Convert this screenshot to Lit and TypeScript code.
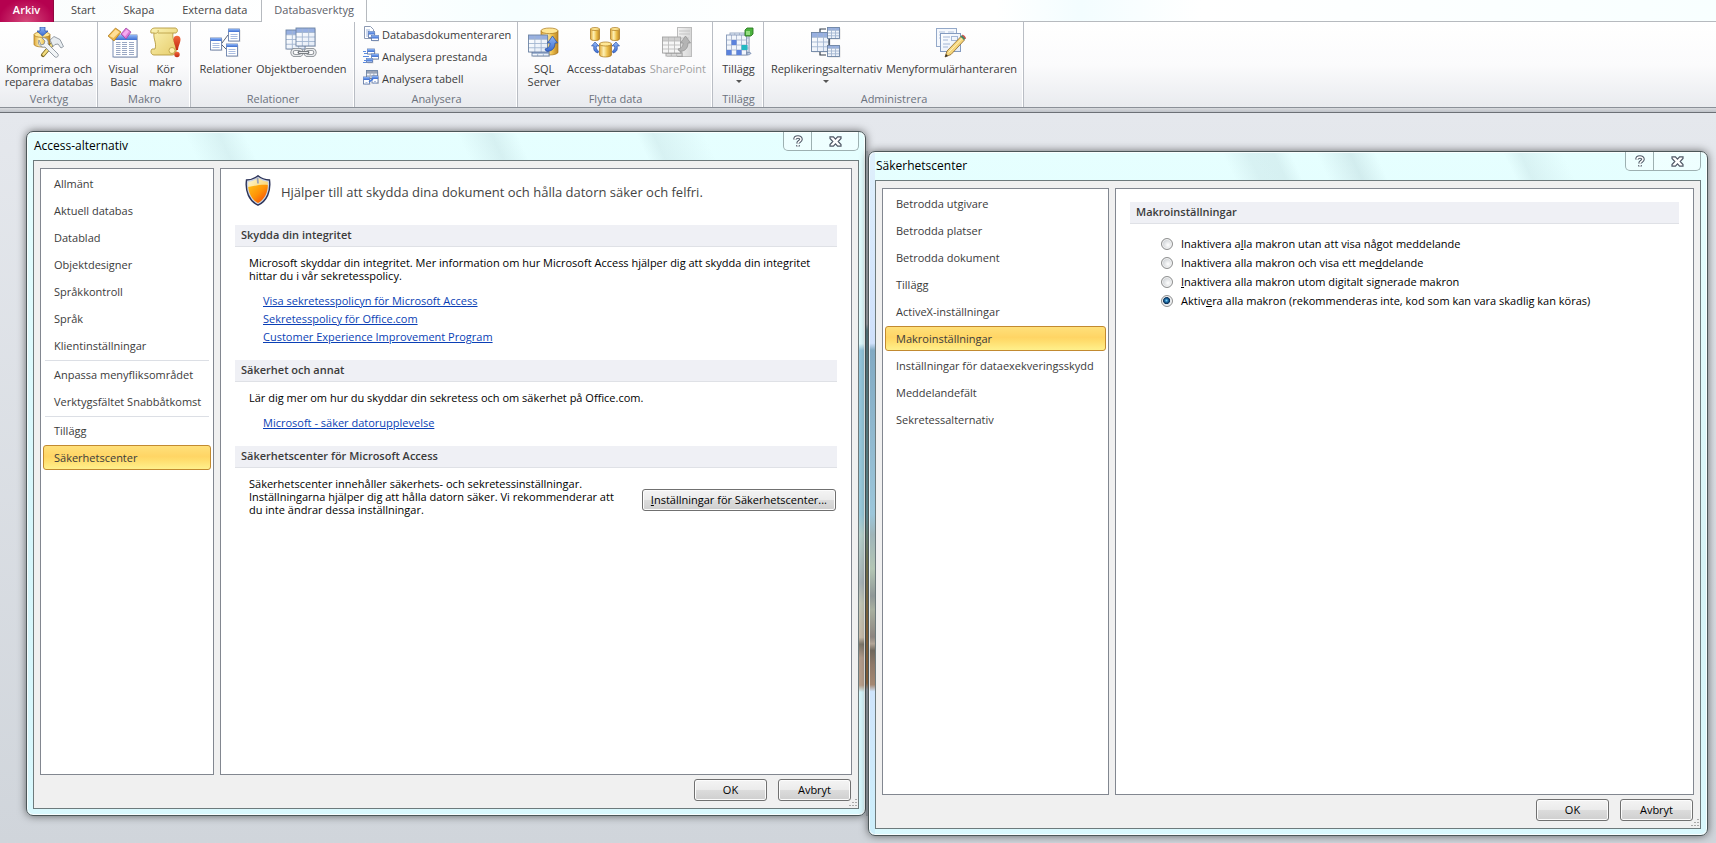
import { LitElement, html, svg, css, nothing, TemplateResult } from "lit";
import { customElement, state } from "lit/decorators.js";
import { classMap } from "lit/directives/class-map.js";

/* ---------- icon building blocks ---------- */

const defs = svg`<defs>
  <linearGradient id="gold" x1="0" x2="1"><stop offset="0" stop-color="#e0a838"/><stop offset=".35" stop-color="#fdf0b4"/><stop offset=".65" stop-color="#edc04c"/><stop offset="1" stop-color="#bd8626"/></linearGradient>
  <linearGradient id="blue" x1="0" y1="0" x2="0" y2="1"><stop offset="0" stop-color="#8fb6f5"/><stop offset="1" stop-color="#3c6dd2"/></linearGradient>
  <linearGradient id="grey" x1="0" x2="1"><stop offset="0" stop-color="#f2f2f2"/><stop offset="1" stop-color="#d6d6d6"/></linearGradient>
  <linearGradient id="paper" x1="0" y1="0" x2="1" y2="1"><stop offset="0" stop-color="#ffffff"/><stop offset="1" stop-color="#e3ebf7"/></linearGradient>
  <linearGradient id="scroll" x1="0" y1="0" x2="1" y2="1"><stop offset="0" stop-color="#fbf3b4"/><stop offset="1" stop-color="#e6cc6a"/></linearGradient>
  <linearGradient id="red" x1="0" y1="0" x2="0" y2="1"><stop offset="0" stop-color="#f4683c"/><stop offset="1" stop-color="#c02a12"/></linearGradient>
  <linearGradient id="shieldTop" x1="0" y1="0" x2="1" y2="1"><stop offset="0" stop-color="#fff6cf"/><stop offset="1" stop-color="#f6c544"/></linearGradient>
  <linearGradient id="shieldLow" x1="0" y1="0" x2="1" y2="1"><stop offset="0" stop-color="#ffc21a"/><stop offset=".5" stop-color="#ff9206"/><stop offset="1" stop-color="#f23c0c"/></linearGradient>
</defs>`;

const range = (n: number) => Array.from({ length: n }, (_, i) => i);

const grid = (x: number, y: number, w: number, h: number, cols: number, rows: number, line = "#a3b5d0", head = "#86a2dc", fill = "url(#paper)", edge = "#6d84a4") => {
  const rh = h / rows, cw = w / cols;
  return svg`<rect x=${x + 1} y=${y + 1} width=${w} height=${h} fill="#000" opacity=".12"/>
    <rect x=${x} y=${y} width=${w} height=${h} fill=${fill}/>
    <rect x=${x} y=${y} width=${w} height=${rh} fill=${head} opacity=".85"/>
    ${range(rows - 1).map(i => svg`<path d="M${x} ${y + rh * (i + 1)}h${w}" stroke=${line} stroke-width=".9"/>`)}
    ${range(cols - 1).map(i => svg`<path d="M${x + cw * (i + 1)} ${y}v${h}" stroke=${line} stroke-width=".9"/>`)}
    <rect x=${x} y=${y} width=${w} height=${h} fill="none" stroke=${edge} stroke-width=".9"/>`;
};

const drum = (x: number, y: number, w: number, h: number) => {
  const r = w / 2, e = w / 6;
  return svg`<path d="M${x} ${y + e}v${h - 2 * e}a${r} ${e} 0 0 0 ${w} 0v${-(h - 2 * e)}z" fill="url(#gold)" stroke="#a8761a" stroke-width=".7"/>
    <ellipse cx=${x + r} cy=${y + e} rx=${r} ry=${e} fill="#ffe795" stroke="#a8761a" stroke-width=".7"/>`;
};

const pane = (x: number, y: number, w: number, h: number, lines: number) => svg`
  <rect x=${x + 1} y=${y + 1} width=${w} height=${h} fill="#000" opacity=".13"/>
  <rect x=${x} y=${y} width=${w} height=${h} fill="#fff" stroke="#5a73a2" stroke-width=".8"/>
  <rect x=${x} y=${y} width=${w} height="3" fill="url(#blue)"/>
  ${range(lines).map(i => svg`<path d="M${x + 2} ${y + 5.5 + i * 2}h${w - 4}" stroke="#9fb4de" stroke-width=".9"/>`)}`;

const sweep = (dx: number, dy: number, fill: string, stroke: string) => svg`
  <path transform="translate(${dx} ${dy})" d="M0 13c4-1 5-3 5-6H2.5L7.5 0l5 7H10c0 6-4 9-9 8z" fill=${fill} stroke=${stroke} stroke-width=".7"/>`;

const pictures: Record<string, TemplateResult> = {
  compress: svg`${drum(1, 5, 16, 15)}
    <path d="M7 0h5v4h3L9.500 9 4 4h3z" fill="url(#blue)" stroke="#1f4aa8" stroke-width=".7"/>
    <path d="M22 14 10 28" stroke="#7d6a26" stroke-width="4.200" stroke-linecap="round"/><path d="M21 15 10.500 27.500" stroke="#f3dc7c" stroke-width="2.600" stroke-linecap="round"/>
    <path d="M17 13l4-3.500 6 3 3.500 7-2.500 1.500-3-4-3 .5-2 2z" fill="#e8edf1" stroke="#7d8791" stroke-width=".8"/>
    <path d="M6 13c-2 4 2 8 6 7l10 10c2 1 4-1 3-3L15 17c1-4-2-7-6-6l3 3-1 3-3 1z" fill="#f1f4f6" stroke="#7d8791" stroke-width=".8"/>`,
  vb: svg`${pane(5, 8, 24, 22, 0)}<rect x="5" y="8" width="24" height="5" fill="url(#blue)"/>
    ${range(7).map(i => svg`<path d="M8 ${15.5 + i * 2}h4.500M14 ${15.5 + i * 2}h5M21 ${15.5 + i * 2}h5" stroke="#9aa8c4" stroke-width="1"/>`)}
    <path d="M0 9 7.500 1 13 5 6 14z" fill="#edb648" stroke="#a8761c" stroke-width=".7"/><path d="M1.500 9 7.500 2.500l4 2.500-6 6z" fill="#ffdf98"/>
    <path d="M13 7l5-6 5 4-5 7z" fill="#dd78d8" stroke="#9a3d9c" stroke-width=".7"/><path d="M14.500 7l4-4.500 2.500 2-4 5z" fill="#f6aef0"/>`,
  run: svg`<path d="M5 1h20c3 0 3 4 1 5h-3c-1 6 2 9 3 15 1 4-1 7-4 7H4c-3 0-4-4-2-6h3C7 16 3 12 4 6H1C0 3 2 1 5 1z" fill="url(#scroll)" stroke="#b59a40" stroke-width=".9"/>
    <path d="M4 6c3 1 5-1 4-3M8 6h15" fill="none" stroke="#b59a40" stroke-width=".8"/><circle cx="22" cy="23.500" r="3" fill="#fff2b0" stroke="#b59a40" stroke-width=".8"/>
    <path d="M23.500 12c0-4.500 7-4.500 7 0 0 4-2 6-2.500 11h-2c-.5-5-2.500-7-2.500-11z" fill="url(#red)"/><circle cx="27" cy="27.500" r="2.700" fill="url(#red)"/>`,
  relations: svg`<path d="M12 16l6-8M12 18l5 5" stroke="#5c6676" stroke-width="1"/>${pane(.5, 11, 11, 12, 3)}${pane(18.5, 2, 11, 12, 3)}${pane(16.5, 17, 11, 12, 3)}`,
  dependencies: svg`${grid(1, 3, 19, 19, 3, 4)}${grid(11, 1, 19, 18, 3, 4)}
    <g fill="none" stroke="#7d8288" stroke-width="3.200"><rect x="7" y="22.500" width="10" height="6" rx="3"/><rect x="20" y="22.500" width="10" height="6" rx="3"/></g>
    <g fill="none" stroke="#e8eaec" stroke-width="1.600"><rect x="7" y="22.500" width="10" height="6" rx="3"/><rect x="20" y="22.500" width="10" height="6" rx="3"/></g>
    <path d="M14 25.500h9" stroke="#6d7278" stroke-width="2.800" stroke-linecap="round"/><path d="M14 25.500h9" stroke="#e8eaec" stroke-width="1.200"/>`,
  sql: svg`${drum(13, 1, 17, 27)}${grid(4, 24, 17, 5, 3, 2)}${grid(.5, 8, 19, 17, 3, 4)}${sweep(17, 9, "url(#blue)", "#1e46a0")}`,
  access: svg`${drum(.5, .5, 9, 13)}${drum(20.5, .5, 9, 13)}${drum(9.5, 15, 12, 15)}
    <path d="M8 26c-4-1-5-4-4-7H1.500L5 15l4 4H6.500c-.5 2 0 4 2 5z" fill="url(#blue)" stroke="#1e46a0" stroke-width=".6"/>
    <path d="M23 26c4-1 5-4 4-7h2.500L26 15l-4 4h2.500c.5 2 0 4-2 5z" fill="url(#blue)" stroke="#1e46a0" stroke-width=".6"/>`,
  sharepoint: svg`<rect x="15.500" y=".5" width="14" height="29" fill="url(#grey)" stroke="#bcbcbc"/><path d="M17 4h11M17 7h11M19 11h8" stroke="#c4c4c4"/>
    ${grid(4, 25, 16, 4, 3, 2, "#bbb", "#d4d4d4", "#f4f4f4", "#a4a4a4")}${grid(.5, 10, 18, 16, 3, 4, "#bcbcbc", "#c8c8c8", "#f6f6f6", "#a4a4a4")}${sweep(16, 9, "#b4b4b4", "#8f8f8f")}`,
  addins: svg`<g transform="translate(3 0)">${grid(4, 6, 19, 20, 4, 4, "#b0bdd2", "#e6edf8", "url(#paper)", "#93a5c0")}${grid(.5, 8, 20, 20, 4, 4, "#a9b7cf", "#f2f6fc", "#f2f6fc", "#8598b8")}
    <path d="M5.500 13h5v5h-5zM.5 23h5v5h-5zM10.500 23h5v5h-5z" fill="#5b82dc"/><path d="M15.500 18h6v5h-6z" fill="#22b9c2"/>
    <path d="M21 28c4 0 4-2 4-2l-4-1z" fill="#b9c7de" stroke="#6e84a8" stroke-width=".7"/>
    <path d="M19 3l2-2h6v6l-2 2h-6z" fill="#4cb23e" stroke="#2c7c24" stroke-width=".9"/><path d="M20 4h4v4h-4z" fill="#93dd80"/></g>`,
  replication: svg`<g transform="translate(1 0)">${grid(.5, 5.5, 18, 19, 3, 4)}<path d="M15 2H9v3M9 25v3h6M18 10v8" fill="none" stroke="#353f4d" stroke-width="1.200"/>${grid(16.5, .5, 12, 11, 3, 4)}${grid(16.5, 18.5, 12, 11, 3, 4)}</g>`,
  menus: svg`<rect x="1.500" y="1.500" width="20" height="18" fill="#f5f8fd" stroke="#94a9c9"/><path d="M4 5h6M4 8h8M4 11h6M13 5h6" stroke="#b3c3dc"/>
    <rect x="5.500" y="6.500" width="20" height="18" fill="url(#paper)" stroke="#849bc0"/><path d="M8 10h7M8 13h5M8 17h7M8 20h5" stroke="#a3b6d6"/><rect x="16.500" y="9.500" width="6" height="4" fill="none" stroke="#a3b6d6"/>
    <path d="M10 30l2-6L26 9.500l3.500 3.500L16 27.500z" fill="#f5d57a" stroke="#8a6526" stroke-width=".8"/><path d="M13.500 25.500 27.500 11" stroke="#fff3c4"/><path d="M10 30l1-3 2 2z" fill="#2b2b2b"/>
    <path d="M25.500 9.500 27 8l3.500 3.500-1.500 1.500z" fill="#3c8a66"/><path d="M27 8c1-1 4 2 4 3.500l-.8.600-3.200-3.600z" fill="#c9524c"/>`,
  documenter: svg`<path d="M1.500.5h6l3 3v9h-9z" fill="#fff" stroke="#8c99b3"/><path d="M3 4h4M3 6h6M3 8h4M3 10h3" stroke="#9fb4de"/>${pane(5.5, 5.500, 6, 6, 1)}${pane(8.5, 9.500, 7, 5, 0)}`,
  performance: svg`${pane(4.5, 1, 7, 5, 0)}${pane(8.5, 6, 7, 5, 0)}${pane(3.5, 10.500, 6, 4, 0)}<path d="M0 3.500h3M1 5.500h3M0 8.500h6M1 12.500h2M0 14.500h3" stroke="#5b8ae0"/>`,
  tableAnalysis: svg`${grid(3.5, .5, 11, 8, 3, 3, "#a0abbd", "#8793a8")}${pane(.5, 7, 6, 7, 2)}${pane(9, 6, 6, 7, 2)}<path d="M6 12l4-3" stroke="#3b73dc" stroke-width="1.500"/>`,
};

const icon = (name: string, size: number) => html`<svg class="icon" width=${size} height=${size} viewBox="0 0 ${size} ${size}" aria-hidden="true">${defs}${pictures[name]}</svg>`;

const shield = html`<svg class="shield" width="26" height="31" viewBox="0 0 26 31" aria-hidden="true">${defs}
  <path d="M13 .8c3 2.500 7 4 11.500 4.200C26 16 22 26 13 30.200 4 26 0 16 1.500 5 6 4.800 10 3.300 13 .8z" fill="#c9d2e6" stroke="#2c3358" stroke-width="1.400"/>
  <path d="M13 3c3 2 6 3.300 9.800 3.800C23.500 16 20 24.500 13 28 6 24.500 2.500 16 3.200 6.800 7 6.300 10 5 13 3z" fill="url(#shieldTop)"/>
  <path d="M3.200 12c6-1 13-3 19.600-2C22.800 18 19 25 13 28 7.500 25 4 19 3.200 12z" fill="url(#shieldLow)"/>
  <path d="M12.500 2.500l.5 6" stroke="#9aa2b8" stroke-width="1.800"/></svg>`;

/* ---------- data ---------- */

interface Command { icon: string; lines: string[]; menu?: boolean; disabled?: boolean; }
interface Group { label: string; width: string; items: Command[]; small?: boolean; }

const groups: Group[] = [
  { label: "Verktyg", width: "g98", items: [{ icon: "compress", lines: ["Komprimera och", "reparera databas"] }] },
  { label: "Makro", width: "g93", items: [{ icon: "vb", lines: ["Visual", "Basic"] }, { icon: "run", lines: ["Kör", "makro"] }] },
  { label: "Relationer", width: "g164", items: [{ icon: "relations", lines: ["Relationer"] }, { icon: "dependencies", lines: ["Objektberoenden"] }] },
  { label: "Analysera", width: "g163", small: true, items: [{ icon: "documenter", lines: ["Databasdokumenteraren"] }, { icon: "performance", lines: ["Analysera prestanda"] }, { icon: "tableAnalysis", lines: ["Analysera tabell"] }] },
  { label: "Flytta data", width: "g195", items: [{ icon: "sql", lines: ["SQL", "Server"] }, { icon: "access", lines: ["Access-databas"] }, { icon: "sharepoint", lines: ["SharePoint"], disabled: true }] },
  { label: "Tillägg", width: "g51", items: [{ icon: "addins", lines: ["Tillägg"], menu: true }] },
  { label: "Administrera", width: "g260", items: [{ icon: "replication", lines: ["Replikeringsalternativ"], menu: true }, { icon: "menus", lines: ["Menyformulärhanteraren"] }] },
];

const optionPages = ["Allmänt", "Aktuell databas", "Datablad", "Objektdesigner", "Språkkontroll", "Språk", "Klientinställningar", "-", "Anpassa menyfliksområdet", "Verktygsfältet Snabbåtkomst", "-", "Tillägg", "Säkerhetscenter"];
const trustPages = ["Betrodda utgivare", "Betrodda platser", "Betrodda dokument", "Tillägg", "ActiveX-inställningar", "Makroinställningar", "Inställningar för dataexekveringsskydd", "Meddelandefält", "Sekretessalternativ"];

/* text before, access key, text after */
const macroChoices: [string, string, string][] = [
  ["Inaktivera a", "l", "la makron utan att visa något meddelande"],
  ["Inaktivera alla makron och visa ett me", "d", "delande"],
  ["", "I", "naktivera alla makron utom digitalt signerade makron"],
  ["Aktiv", "e", "ra alla makron (rekommenderas inte, kod som kan vara skadlig kan köras)"],
];

const base = css`
  * { box-sizing: border-box; }
  button { font: inherit; color: inherit; margin: 0; border: 0; padding: 0; background: none; }
  h2, h3, p, ul { margin: 0; padding: 0; font: inherit; }
`;

/* ---------- ribbon ---------- */

@customElement("ribbon-bar")
class RibbonBar extends LitElement {
  static styles = [base, css`
    :host { display: block; color: #3b3b3b; }
    .tabs { display: flex; height: 22px; background: linear-gradient(90deg, #fafdfd, #fff 20%, #f6feff 30%, #fff 45%, #fff 58%, #f3fdff 63%, #fff 70%, #f8ffff); box-shadow: inset 0 -1px #b6babf; }
    .tab { padding: 0 14px 2px; height: 22px; line-height: 20px; color: #444; }
    .file { width: 54px; padding: 0 0 2px; margin-right: 3px; color: #fff; font-weight: 600; background: radial-gradient(ellipse at 50% 100%, #d64a7c, #b5014f 75%); border-right: 1px solid #8e0a3e; }
    .active { padding: 0 12px 2px; background: #fff; border: 1px solid #b6babf; border-width: 0 1px; color: #5c6068; }
    .groups { display: flex; height: 85px; background: linear-gradient(#fff, #fbfbfc 50%, #e9ebef); }
    .group { display: flex; flex-direction: column; padding-left: 1px; border-right: 1px solid #b9bdc4; box-shadow: inset -1px 0 #fff; }
    .g98 { width: 98px; } .g93 { width: 93px; } .g164 { width: 164px; } .g163 { width: 163px; }
    .g195 { width: 195px; } .g51 { width: 51px; } .g260 { width: 260px; }
    .items { flex: 1; display: flex; justify-content: center; gap: 4px; padding-top: 5px; }
    .group.small .items { flex-direction: column; justify-content: flex-start; align-items: flex-start; gap: 6px; padding: 4px 0 0 7px; }
    .command { display: flex; flex-direction: column; align-items: center; min-width: 38px; line-height: 13px; white-space: nowrap; }
    .text { display: block; margin-top: 3px; }
    .group.small .command { flex-direction: row; gap: 3px; height: 16px; }
    .group.small .text { margin: 0; }
    .command:disabled { color: #a0a0a0; }
    .arrow { border: 3px solid transparent; border-top-color: #555; border-bottom: 0; margin-top: 5px; }
    .name { text-align: center; line-height: 15px; height: 16px; color: #6c727d; }
    .edge { height: 6px; border-top: 1px solid #8b9098; border-bottom: 1px solid #6c7076; background: linear-gradient(#d8dade, #bfc3c9); }
    .icon { display: block; }
  `];

  private command(c: Command, small: boolean) {
    return html`<button class="command" type="button" ?disabled=${c.disabled}>
      ${icon(c.icon, small ? 16 : 32)}
      <span class="text">${c.lines.map((l, i) => html`${i ? html`<br>` : nothing}${l}`)}</span>
      ${c.menu ? html`<span class="arrow"></span>` : nothing}
    </button>`;
  }

  render() {
    return html`
      <div class="tabs" role="tablist">
        <button class="tab file" type="button">Arkiv</button>
        ${["Start", "Skapa", "Externa data"].map(t => html`<button class="tab" type="button" role="tab">${t}</button>`)}
        <button class="tab active" type="button" role="tab" aria-selected="true">Databasverktyg</button>
      </div>
      <div class="groups">
        ${groups.map(g => html`<section class=${classMap({ group: true, small: !!g.small, [g.width]: true })}>
          <div class="items">${g.items.map(c => this.command(c, !!g.small))}</div>
          <div class="name">${g.label}</div>
        </section>`)}
      </div>
      <div class="edge"></div>`;
  }
}

/* ---------- window frame ---------- */

@customElement("glass-window")
class GlassWindow extends LitElement {
  static properties = { heading: {}, pages: { attribute: false }, current: {}, wide: { type: Boolean } };
  declare heading: string;
  declare pages: string[];
  declare current: string;
  declare wide: boolean;

  static styles = [base, css`
    :host { display: flex; flex-direction: column; border: 1px solid #4c5759; border-radius: 7px; padding: 0 6px 6px; color: #000;
      box-shadow: 0 0 8px rgba(0, 0, 0, .55), inset 0 0 0 1px rgba(255, 255, 255, .8); }
    .bar { display: flex; align-items: flex-start; justify-content: space-between; height: 28px; padding-left: 1px; }
    .title { font-size: 12px; line-height: 28px; }
    .tools { display: flex; border: 1px solid #9db0b1; border-top: 0; border-radius: 0 0 5px 5px; background: rgba(255, 255, 255, .35); }
    .tool { display: flex; align-items: center; justify-content: center; height: 18px; width: 27px; }
    .close { width: 47px; border-left: 1px solid #9db0b1; }
    .client { flex: 1; display: flex; flex-direction: column; gap: 4px; padding: 7px 6px 7px; border: 1px solid #6d7a7c; background: #f0f0f0; }
    .panes { flex: 1; display: flex; gap: 6px; }
    .list { width: 174px; padding: 2px; border: 1px solid #828790; background: #fff; }
    .list.wide { width: 227px; }
    .page { display: block; width: 100%; height: 25px; margin-bottom: 2px; padding: 0 0 1px 10px; border: 1px solid transparent; border-radius: 3px; text-align: left; color: #3b3b3b; white-space: nowrap; }
    .current { border-color: #c28a30; background: linear-gradient(#ffe07a, #ffd565 45%, #ffdc6c 60%, #fff08c); }
    .rule { height: 1px; margin: 0 2px 1px; border: 0; background: #dcdfe5; }
    .body { flex: 1; min-width: 0; border: 1px solid #828790; background: #fff; }
    .actions { display: flex; justify-content: flex-end; gap: 11px; padding-right: 1px; }
    .push { width: 73px; height: 22px; border: 1px solid #707070; border-radius: 3px; padding-bottom: 1px; background: linear-gradient(#f4f4f4, #ebebeb 49%, #dcdcdc 50%, #cfcfcf); box-shadow: inset 0 0 0 1px #fcfcfc; }
    .foot { position: relative; }
    .grip { position: absolute; right: -5px; bottom: -6px; }
  `];

  render() {
    return html`
      <div class="bar">
        <h2 class="title">${this.heading}</h2>
        <div class="tools">
          <button class="tool" type="button" aria-label="Hjälp"><svg width="10" height="13" viewBox="0 0 10 13"><path d="M2 4.500C2 1.200 8 1.200 8 4.300 8 6.300 5 6.300 5 8.500M5 10v1.600" fill="none" stroke="#4f5866" stroke-width="3.600"/><path d="M2 4.500C2 1.200 8 1.200 8 4.300 8 6.300 5 6.300 5 8.500M5 10v1.400" fill="none" stroke="#fff" stroke-width="1.500"/></svg></button>
          <button class="tool close" type="button" aria-label="Stäng"><svg width="13" height="11" viewBox="0 0 13 11"><path d="M1 .8h3.400l2.100 2.400L8.600.8H12v1.600L9.200 5.500 12 8.600v1.600H8.600L6.500 7.800l-2.100 2.400H1V8.600l2.800-3.100L1 2.400z" fill="#fff" stroke="#4f5866" stroke-width="1.200"/></svg></button>
        </div>
      </div>
      <div class="client">
        <div class="panes">
          <nav class=${classMap({ list: true, wide: this.wide })}>
            ${this.pages.map(p => p === "-" ? html`<hr class="rule">` : html`<button type="button" class=${classMap({ page: true, current: p === this.current })}>${p}</button>`)}
          </nav>
          <div class="body"><slot></slot></div>
        </div>
        <div class="foot">
          <div class="actions">
            <button class="push" type="button">OK</button>
            <button class="push" type="button">Avbryt</button>
          </div>
          <svg class="grip" width="9" height="9" viewBox="0 0 9 9" aria-hidden="true"><path d="M7 1h2v1H7zM4 4h2v1H4zM7 4h2v1H7zM1 7h2v1H1zM4 7h2v1H4zM7 7h2v1H7z" fill="#a9a9a9"/></svg>
        </div>
      </div>`;
  }
}

/* ---------- application ---------- */

@customElement("app-root")
class AppRoot extends LitElement {
  @state() private macro = 3;

  static styles = [base, css`
    :host { display: flex; flex-direction: column; min-height: 100vh; font: 11px/13px "Open Sans", "Noto Sans", sans-serif; background: #e5e8ed; }
    .desk { flex: 1; display: grid; grid-template-columns: minmax(0, 1fr) 2px minmax(0, 1fr); padding: 18px 8px 7px 26px; background: linear-gradient(#e5e8ed, #d0d5db); }
    .options { margin-bottom: 20px;
      background:
        linear-gradient(transparent 31%, #93c6dc 32%, #9acbdc 56%, #b8d3cd 59%, #a9b4b8 66%, #c4c9b8 69%, #c9bcab 74%, #7d766a 75%, #b39c8c 77%, #b9a08c 81%, transparent 82%) right top / 6px 100% no-repeat,
        linear-gradient(65deg, transparent 20%, rgba(160, 190, 195, .2) 24%, transparent 27%, transparent 52%, rgba(160, 190, 195, .22) 56%, transparent 59%, transparent 73%, rgba(160, 190, 195, .2) 75%, transparent 81%) 0 0 / 100% 28px no-repeat,
        linear-gradient(#e6ffff, #d6f6fb 60%, #d9f8fd); }
    .trust { margin-top: 20px;
      background:
        linear-gradient(#dff0fc, #cfe0fb 28%, #82aac3 29%, #9cc6da 53%, #9fb5b9 56%, #b3c6b4 61%, #8f9797 65%, #a8b0a0 67%, #8d8580 71%, #b3a698 72%, #6f675c 73%, #8d7868 75%, #a58873 78%, #cfe4fb 79%, #cdeffb) 0 0 / 6px 100% no-repeat,
        linear-gradient(65deg, transparent 43%, rgba(160, 190, 195, .2) 46%, rgba(160, 190, 195, .22) 49%, transparent 51%, transparent 54%, rgba(160, 190, 195, .28) 58%, transparent 61%, transparent 76%, rgba(160, 190, 195, .2) 78%, transparent 83%) 0 0 / 100% 28px no-repeat,
        linear-gradient(#e6ffff, #d6f3f6 60%, #d9f8fd); }
    .gap { z-index: 1; margin: 20px 0; background: linear-gradient(#8f9499, #85898e 26%, #4d6a70 27%, #587d83 55%, #6a6a48 62%, #7c5b34 72%, #7d5a38 80%, #7d8288 81%); }
    .page { padding: 0 14px; }
    .intro { display: flex; gap: 10px; align-items: flex-start; height: 56px; padding: 6px 0 0 10px; font-size: 13px; line-height: 34px; color: #444; }
    .shield { display: block; }
    .section { height: 22px; padding-left: 6px; border-bottom: 1px solid #dfe1e6; background: #eff0f5; line-height: 20px; font-weight: 600; color: #3b3b3b; }
    .para { padding: 9px 0 0 14px; }
    .links { display: flex; flex-direction: column; align-items: flex-start; gap: 5px; list-style: none; padding: 12px 0 17px 28px; }
    .link { color: #0a3fb5; text-decoration: underline; }
    .row { display: flex; justify-content: space-between; align-items: center; padding: 9px 1px 0 14px; }
    .blurb { width: 376px; }
    .wide-push { height: 22px; margin-top: 7px; padding: 0 8px 1px; border: 1px solid #707070; border-radius: 3px; background: linear-gradient(#f4f4f4, #ebebeb 49%, #dcdcdc 50%, #cfcfcf); box-shadow: inset 0 0 0 1px #fcfcfc; white-space: nowrap; }
    .macros { padding-top: 13px; }
    .choices { display: grid; gap: 6px; margin: 0; border: 0; padding: 13px 0 0 31px; }
    .choice { display: flex; align-items: center; gap: 8px; }
    .radio { appearance: none; flex: none; width: 12px; height: 12px; margin: 0; border: 1px solid #8e8f8f; border-radius: 50%; background: radial-gradient(circle at 60% 60%, #fff, #c9cdd1 75%); box-shadow: inset 0 0 0 1px #f4f4f4; }
    .radio:checked { background: radial-gradient(circle at 45% 45%, #7fd0f5 0, #1a6ba5 22%, #0c2c50 42%, #e2e6ea 50%); }
  `];

  render() {
    return html`
      <ribbon-bar></ribbon-bar>
      <main class="desk">
        <glass-window class="options" heading="Access-alternativ" .pages=${optionPages} current="Säkerhetscenter">
          <div class="page">
            <div class="intro">${shield}<p>Hjälper till att skydda dina dokument och hålla datorn säker och felfri.</p></div>
            <h3 class="section">Skydda din integritet</h3>
            <p class="para">Microsoft skyddar din integritet. Mer information om hur Microsoft Access hjälper dig att skydda din integritet hittar du i vår sekretesspolicy.</p>
            <ul class="links">
              <li><a class="link" href="#privacy">Visa sekretesspolicyn för Microsoft Access</a></li>
              <li><a class="link" href="#office">Sekretesspolicy för Office.com</a></li>
              <li><a class="link" href="#ceip">Customer Experience Improvement Program</a></li>
            </ul>
            <h3 class="section">Säkerhet och annat</h3>
            <p class="para">Lär dig mer om hur du skyddar din sekretess och om säkerhet på Office.com.</p>
            <ul class="links"><li><a class="link" href="#security">Microsoft - säker datorupplevelse</a></li></ul>
            <h3 class="section">Säkerhetscenter för Microsoft Access</h3>
            <div class="row">
              <p class="blurb">Säkerhetscenter innehåller säkerhets- och sekretessinställningar. Inställningarna hjälper dig att hålla datorn säker. Vi rekommenderar att du inte ändrar dessa inställningar.</p>
              <button class="wide-push" type="button"><u>I</u>nställningar för Säkerhetscenter...</button>
            </div>
          </div>
        </glass-window>
        <div class="gap"></div>
        <glass-window class="trust" heading="Säkerhetscenter" .pages=${trustPages} current="Makroinställningar" wide>
          <div class="page macros">
            <h3 class="section">Makroinställningar</h3>
            <fieldset class="choices" aria-label="Makroinställningar">
              ${macroChoices.map(([a, key, b], i) => html`<label class="choice">
                <input class="radio" type="radio" name="macro" .checked=${this.macro === i} @change=${() => (this.macro = i)}>
                <span>${a}<u>${key}</u>${b}</span>
              </label>`)}
            </fieldset>
          </div>
        </glass-window>
      </main>`;
  }
}
